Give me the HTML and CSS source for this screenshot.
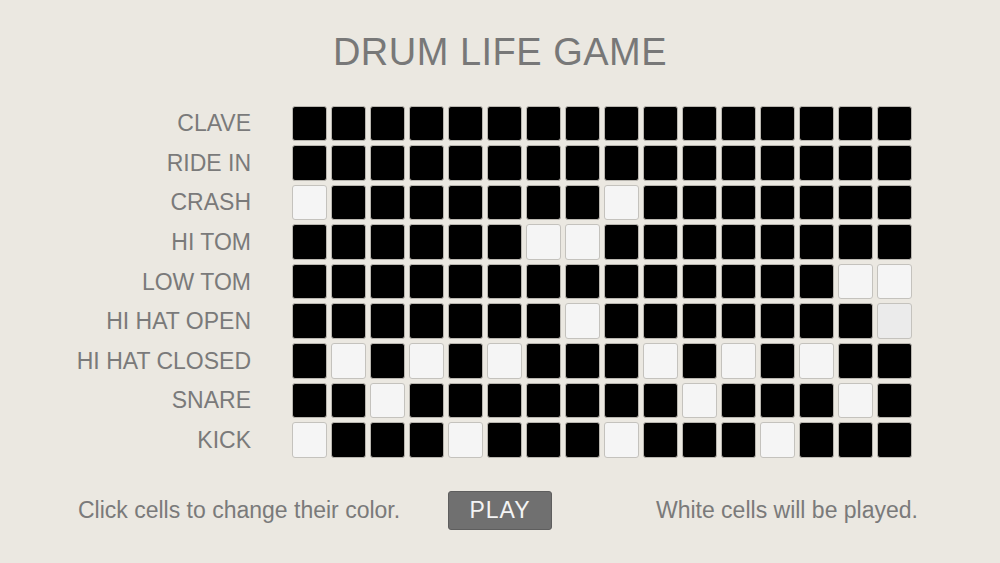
FILE: index.html
```html
<!DOCTYPE html>
<html lang="en">
<head>
<meta charset="utf-8">
<title>Drum Life Game</title>
<link rel="stylesheet" href="styles.css">
</head>
<body>
<div class="app">
  <h1 class="title">DRUM LIFE GAME</h1>
  <div class="board">
    <div class="label">CLAVE</div>
    <div class="cell"></div><div class="cell"></div><div class="cell"></div><div class="cell"></div><div class="cell"></div><div class="cell"></div><div class="cell"></div><div class="cell"></div><div class="cell"></div><div class="cell"></div><div class="cell"></div><div class="cell"></div><div class="cell"></div><div class="cell"></div><div class="cell"></div><div class="cell"></div>
    <div class="label">RIDE IN</div>
    <div class="cell"></div><div class="cell"></div><div class="cell"></div><div class="cell"></div><div class="cell"></div><div class="cell"></div><div class="cell"></div><div class="cell"></div><div class="cell"></div><div class="cell"></div><div class="cell"></div><div class="cell"></div><div class="cell"></div><div class="cell"></div><div class="cell"></div><div class="cell"></div>
    <div class="label">CRASH</div>
    <div class="cell on"></div><div class="cell"></div><div class="cell"></div><div class="cell"></div><div class="cell"></div><div class="cell"></div><div class="cell"></div><div class="cell"></div><div class="cell on"></div><div class="cell"></div><div class="cell"></div><div class="cell"></div><div class="cell"></div><div class="cell"></div><div class="cell"></div><div class="cell"></div>
    <div class="label">HI TOM</div>
    <div class="cell"></div><div class="cell"></div><div class="cell"></div><div class="cell"></div><div class="cell"></div><div class="cell"></div><div class="cell on"></div><div class="cell on"></div><div class="cell"></div><div class="cell"></div><div class="cell"></div><div class="cell"></div><div class="cell"></div><div class="cell"></div><div class="cell"></div><div class="cell"></div>
    <div class="label">LOW TOM</div>
    <div class="cell"></div><div class="cell"></div><div class="cell"></div><div class="cell"></div><div class="cell"></div><div class="cell"></div><div class="cell"></div><div class="cell"></div><div class="cell"></div><div class="cell"></div><div class="cell"></div><div class="cell"></div><div class="cell"></div><div class="cell"></div><div class="cell on"></div><div class="cell on"></div>
    <div class="label">HI HAT OPEN</div>
    <div class="cell"></div><div class="cell"></div><div class="cell"></div><div class="cell"></div><div class="cell"></div><div class="cell"></div><div class="cell"></div><div class="cell on"></div><div class="cell"></div><div class="cell"></div><div class="cell"></div><div class="cell"></div><div class="cell"></div><div class="cell"></div><div class="cell"></div><div class="cell hover"></div>
    <div class="label">HI HAT CLOSED</div>
    <div class="cell"></div><div class="cell on"></div><div class="cell"></div><div class="cell on"></div><div class="cell"></div><div class="cell on"></div><div class="cell"></div><div class="cell"></div><div class="cell"></div><div class="cell on"></div><div class="cell"></div><div class="cell on"></div><div class="cell"></div><div class="cell on"></div><div class="cell"></div><div class="cell"></div>
    <div class="label">SNARE</div>
    <div class="cell"></div><div class="cell"></div><div class="cell on"></div><div class="cell"></div><div class="cell"></div><div class="cell"></div><div class="cell"></div><div class="cell"></div><div class="cell"></div><div class="cell"></div><div class="cell on"></div><div class="cell"></div><div class="cell"></div><div class="cell"></div><div class="cell on"></div><div class="cell"></div>
    <div class="label">KICK</div>
    <div class="cell on"></div><div class="cell"></div><div class="cell"></div><div class="cell"></div><div class="cell on"></div><div class="cell"></div><div class="cell"></div><div class="cell"></div><div class="cell on"></div><div class="cell"></div><div class="cell"></div><div class="cell"></div><div class="cell on"></div><div class="cell"></div><div class="cell"></div><div class="cell"></div>
  </div>
  <div class="footer">
    <span class="hint left">Click cells to change their color.</span>
    <button class="play">PLAY</button>
    <span class="hint right">White cells will be played.</span>
  </div>
</div>
</body>
</html>
```
FILE: styles.css
```css
html, body {
  margin: 0;
  padding: 0;
  background: #ebe8e1;
}
body {
  font-family: "Liberation Sans", Arial, sans-serif;
  color: #777777;
}
.app {
  width: 1000px;
  height: 563px;
  overflow: hidden;
}
.title {
  margin: 33px 0 0;
  font-size: 38px;
  line-height: 38px;
  font-weight: normal;
  text-align: center;
  letter-spacing: 0.5px;
  color: #787878;
}
.board {
  margin-top: 34.5px;
  display: grid;
  grid-template-columns: 288px repeat(16, 35px);
  grid-auto-rows: 35.5px;
  column-gap: 4px;
  row-gap: 4.1px;
}
.label {
  align-self: center;
  text-align: right;
  padding-right: 37px;
  font-size: 23px;
  line-height: 26px;
  color: #7a7a7a;
}
.cell {
  box-sizing: border-box;
  background: #000000;
  border: 1px solid #b9b6b0;
  border-radius: 3px;
}
.cell.on {
  background: #f5f5f5;
  border-color: #c4c2bd;
}
.cell.hover {
  background: #ebebeb;
  border-color: #c4c2bd;
}
.footer {
  margin-top: 33px;
  display: grid;
  grid-template-columns: 1fr auto 1fr;
  align-items: center;
  padding: 0 82px 0 78px;
}
.hint {
  font-size: 23px;
  line-height: 26px;
  color: #7a7a7a;
}
.left { justify-self: start; }
.right { justify-self: end; }
.play {
  justify-self: center;
  margin-left: 4px;
  width: 104px;
  height: 39px;
  padding: 0;
  background: #707070;
  border: 1px solid #5e5e5e;
  border-radius: 3px;
  color: #f4f4f4;
  font-family: "Liberation Sans", Arial, sans-serif;
  font-size: 23px;
  letter-spacing: 1px;
}
```
